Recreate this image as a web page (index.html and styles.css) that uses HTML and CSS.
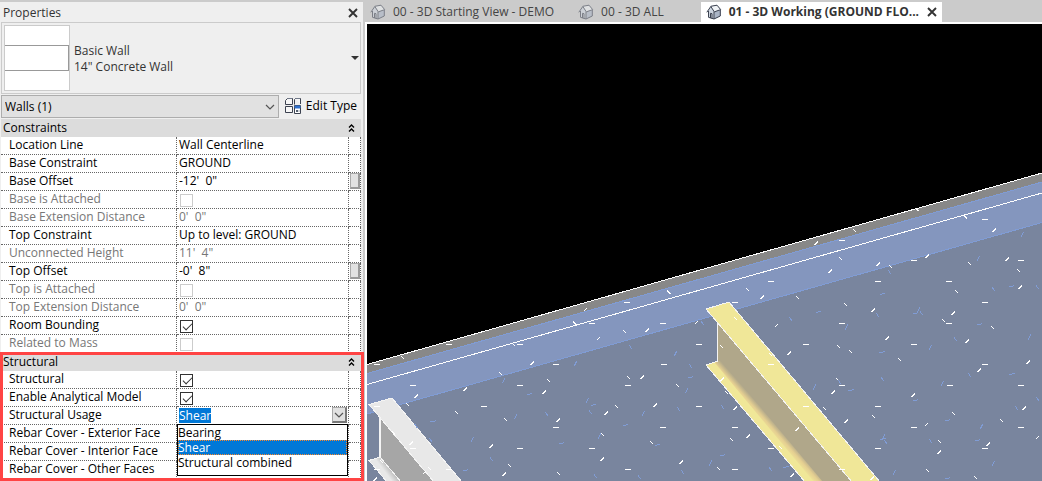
FILE: index.html
```html
<!DOCTYPE html>
<html lang="en">
<head>
<meta charset="utf-8">
<title>Properties - 3D Working</title>
<link rel="stylesheet" href="styles.css">
</head>
<body>
<svg width="0" height="0" class="defs" aria-hidden="true">
  <symbol id="house" viewBox="0 0 16 16">
    <path d="M1 7.500 5 2 11 1 15 5.500 14.500 12 8 15.200 2.500 13.500V8z" fill="#cdd5e0"/>
    <path d="M5 2.200 11 1.200 14.700 5.500 8.500 7.500z" fill="#f0f3f6"/>
    <path d="M8.300 7.800 14.300 6V12L8.300 14.800z" fill="#aab5c6"/>
    <path d="M.8 8.300 4.800 2.500 8.500 8.200M4.800 2.300 11 1.200 14.700 5.600 8.500 7.800M2.500 7v6.300L8 15V8M8 15 14.300 12V6M4.500 14V9.300l1.500.4v4.800" fill="none" stroke="#3c4250"/>
  </symbol>
  <symbol id="cross" viewBox="0 0 10 10"><path d="M1 1 9 9M9 1 1 9" fill="none" stroke="#333" stroke-width="1.900"/></symbol>
  <symbol id="collapse" viewBox="0 0 7 8"><path d="M1 3.500 3.500 1 6 3.500M1 7.500 3.500 5 6 7.500" fill="none" stroke="#000" stroke-width="1.400"/></symbol>
  <symbol id="chevron" viewBox="0 0 10 6"><path d="M1 1 5 5 9 1" fill="none" stroke="#555" stroke-width="1.200"/></symbol>
</svg>
<div class="app">
  <aside class="panel">
    <header class="panel-head">
      <h1>Properties</h1>
      <button class="icon-button" aria-label="Close properties"><svg class="cross"><use href="#cross"/></svg></button>
    </header>
    <button class="type-card">
      <span class="swatch"><span></span><span class="core"></span><span></span></span>
      <span class="type-name">Basic Wall<br>14" Concrete Wall</span>
      <svg class="caret" viewBox="0 0 8 4"><path d="M0 0h8L4 4z" fill="#333"/></svg>
    </button>
    <div class="filter">
      <div class="filter-select">
        <select aria-label="Category filter"><option>Walls (1)</option></select>
        <svg class="chevron"><use href="#chevron"/></svg>
      </div>
      <button class="edit-type">
        <svg class="edit-icon" viewBox="0 0 17 17" fill="none" stroke="#3c4250">
          <path d="M2.500 1.500h5v6h-7v-4zM10.500 1.500h5v5.500M9.500 7.500v-5l1-1M.5 9.500h7v6h-7z" fill="#f7f7f7"/>
          <path d="M2.500 1.500h4.500M10.500 1.500H15" stroke="#70798a"/>
          <path d="M9.500 8.500h6v8h-6z" fill="#fff"/><path d="M10 9h5v2h-5z" fill="#2f6fca" stroke="#2f6fca"/>
          <path d="m11 14 1-1 1 1-1 1zM13.500 14h1" stroke="#55606f"/>
        </svg>Edit Type
      </button>
    </div>

    <section>
      <table class="props">
        <colgroup><col class="name-col"><col><col class="link-col"></colgroup>
        <thead><tr><th colspan="3"><div class="section-head">Constraints<button class="icon-button" aria-label="Collapse Constraints"><svg class="collapse"><use href="#collapse"/></svg></button></div></th></tr></thead>
        <tbody>
          <tr><th>Location Line</th><td>Wall Centerline</td><td></td></tr>
          <tr><th>Base Constraint</th><td>GROUND</td><td></td></tr>
          <tr><th>Base Offset</th><td>-12'&nbsp; 0"</td><td><button class="assoc" aria-label="Associate Base Offset"></button></td></tr>
          <tr class="off"><th><label for="base-att">Base is Attached</label></th><td><input type="checkbox" id="base-att" disabled></td><td></td></tr>
          <tr class="off"><th>Base Extension Distance</th><td>0'&nbsp; 0"</td><td></td></tr>
          <tr><th>Top Constraint</th><td>Up to level: GROUND</td><td></td></tr>
          <tr class="off"><th>Unconnected Height</th><td>11'&nbsp; 4"</td><td></td></tr>
          <tr><th>Top Offset</th><td>-0'&nbsp; 8"</td><td><button class="assoc" aria-label="Associate Top Offset"></button></td></tr>
          <tr class="off"><th><label for="top-att">Top is Attached</label></th><td><input type="checkbox" id="top-att" disabled></td><td></td></tr>
          <tr class="off"><th>Top Extension Distance</th><td>0'&nbsp; 0"</td><td></td></tr>
          <tr><th><label for="room">Room Bounding</label></th><td><input type="checkbox" id="room" checked></td><td></td></tr>
          <tr class="off"><th><label for="mass">Related to Mass</label></th><td><input type="checkbox" id="mass" disabled></td><td></td></tr>
        </tbody>
      </table>
    </section>
    <section class="marked">
      <table class="props">
        <colgroup><col class="name-col"><col><col class="link-col"></colgroup>
        <thead><tr><th colspan="3"><div class="section-head">Structural<button class="icon-button" aria-label="Collapse Structural"><svg class="collapse"><use href="#collapse"/></svg></button></div></th></tr></thead>
        <tbody>
          <tr><th><label for="struct">Structural</label></th><td><input type="checkbox" id="struct" checked></td><td></td></tr>
          <tr><th><label for="analytic">Enable Analytical Model</label></th><td><input type="checkbox" id="analytic" checked></td><td></td></tr>
          <tr><th><label for="usage">Structural Usage</label></th><td class="combo-cell">
            <div class="combo">
              <select id="usage"><option>Shear</option></select>
              <button class="drop" aria-label="Show options"><svg class="chevron"><use href="#chevron"/></svg></button>
            </div>
            <ul class="options" role="listbox" aria-label="Structural Usage">
              <li role="option">Bearing</li><li role="option" aria-selected="true">Shear</li><li role="option">Structural combined</li>
            </ul></td><td></td></tr>
          <tr><th>Rebar Cover - Exterior Face</th><td></td><td></td></tr>
          <tr><th>Rebar Cover - Interior Face</th><td></td><td></td></tr>
          <tr><th>Rebar Cover - Other Faces</th><td></td><td></td></tr>
        </tbody>
      </table>
    </section>
  </aside>

  <main class="workspace">
    <nav class="tabs" aria-label="Open views">
      <a class="tab" href="#start"><svg class="house"><use href="#house"/></svg>00 - 3D Starting View - DEMO</a>
      <a class="tab" href="#all"><svg class="house"><use href="#house"/></svg>00 - 3D ALL</a>
      <div class="tab active"><a href="#working"><svg class="house"><use href="#house"/></svg><span>01 - 3D Working (GROUND FLO...</span></a><button class="icon-button" aria-label="Close view"><svg class="cross"><use href="#cross"/></svg></button></div>
    </nav>
    <div class="view">
      <svg class="scene" viewBox="367 24 675 457" preserveAspectRatio="xMinYMin slice" shape-rendering="crispEdges" role="img" aria-label="3D model view">
        <defs>
          <linearGradient id="yweb" gradientUnits="userSpaceOnUse" x1="752" y1="413" x2="760" y2="406"><stop offset="0" stop-color="#f0e798"/><stop offset=".5" stop-color="#e5cf91"/><stop offset="1" stop-color="#b0a78a"/></linearGradient>
          <linearGradient id="gweb" gradientUnits="userSpaceOnUse" x1="382" y1="468" x2="390" y2="462"><stop offset="0" stop-color="#e8e8e8"/><stop offset="1" stop-color="#a6a6a6"/></linearGradient>
        </defs>
        <path d="M367 24h675v457H367z"/>
        <path d="M367 364.500 1042 173v308H367z" fill="#888"/>
        <path d="M367 373.500 1042 182v299H367z" fill="#8496be"/>
        <path d="M367 414 1042 222.500V481H367z" fill="#79859e"/>
        <path d="M367 373.500 1042 182M367 414 1042 222.500" stroke="#809cd5"/>
        <path d="M367 364.500 1042 173M367 384.500 1042 193" stroke="#fff"/>
        <g stroke="#f4f4f4" stroke-linejoin="round">
          <path d="M380 417v39.500L401 482h33z" fill="#a6a6a6" stroke="none"/>
          <path d="M369 460.500 380 457 401 482H387z" fill="url(#gweb)"/>
          <path d="M369 404.500 392 398 462 482H434z" fill="#e8e8e8"/>
          <path d="M380 418v39" stroke-width="2"/>
        </g>
        <g>
          <path d="M717 322v39L818 482h34z" fill="#b0a78a"/>
          <path d="M706 365 717 361 818 482H805z" fill="#f0e798"/>
          <path d="M717 361h5L823 482h-9L715 363z" fill="url(#yweb)" shape-rendering="auto"/>
          <path d="M706 309 729 302 880 482H852z" fill="#f0e798"/>
          <path d="M880 482 729 302 706 309 852 482M717.500 322v39L706 365 805 482" fill="none" stroke="#f4f4f4"/>
        </g>
        <g id="hatch" fill="none"></g>
      </svg>
    </div>
  </main>
</div>
<script src="hatch.js"></script>
</body>
</html>
```
FILE: hatch.js
```js
// Concrete hatch marks; coordinates are thirds of a scene unit from each group's origin.
const shapes = {
  dash: ['#fff', -9, 0, 'h18'],
  rise: ['#fff', -5, 5, 'l10-10'],
  fall: ['#fff', -5, -5, 'l10 10'],
  blueRise: ['#809cd5', -4, 8, 'l8-16'],
  blueFlat: ['#809cd5', -8, 2, 'h7l9-3'],
  blueFall: ['#809cd5', -4, -6, 'l8 12']
};
const groups = [
  { x: 360, y: 270, marks: {
    dash: '51,283 267,223 159,346 51,409 372,409 480,223 480,346 588,283 588,472 480,535 159,535 51,598 267,598',
    rise: '316,358 169,379 517,280 553,367 394,529 433,613 595,451 154,520 46,628 194,607',
    fall: '127,262 142,403 289,427 421,310 460,223 565,331 436,448 448,586 595,610 100,488 64,574 208,595 645,160',
    blueRise: '432,331 468,439 337,508 647,280',
    blueFlat: '219,453 508,371 604,519 316,600',
    blueFall: '168,468 213,511 394,568 561,433' } },
  { x: 582, y: 200, marks: {
    dash: '30,370 135,307 243,370 351,433 459,307 567,244 780,121 888,244 1209,58 996,181 1102,244 1317,181 1209,307 780,370 673,433 996,433 1101,370 1210,493 567,493 780,556 1104,556 1317,556 246,493 138,556 351,619 672,619 888,619 243,682 459,682 996,682 1317,682 30,745 567,745 888,745 1209,745 138,808 459,808 780,808',
    rise: '11,328 50,415 196,391 344,367 181,532 220,616 73,640 61,778 298,787 541,292 583,377 622,460 460,625 499,709 646,688 754,577 793,664 745,214 703,130 889,193 916,415 874,331 994,586 1033,674 1036,169 1276,178 1237,91 1114,340 1156,424 1192,511 1315,262 1339,487 1327,625 1366,713 1219,733 1072,757 631,826 421,538 871,835',
    fall: '260,277 127,394 139,532 286,556 103,619 61,703 208,727 409,805 496,268 646,292 460,355 418,439 433,577 448,718 595,742 565,463 769,439 805,454 766,538 727,625 790,313 775,175 817,91 925,199 874,649 952,478 1084,361 1123,274 1162,190 1150,50 1309,211 1231,382 1114,640 1072,724 1036,811 1180,832 1258,661 1005,29',
    blueRise: '16,601 53,708 281,460 315,571 184,640 386,789 697,561 793,381 1045,442 1081,550 1189,175 1321,104 1343,411 1199,679 1234,790 937,818 1010,330 905,710',
    blueFlat: '34,613 325,531 130,674 227,733 421,765 709,334 901,280 900,455 807,569 1000,600 1096,660 1192,372 1290,520 1289,258 1187,720 1096,834 612,799 1001,339 903,715',
    blueFall: '145,440 325,497 25,637 290,628 361,369 421,620 565,807 302,817 40,829 171,830 626,357 887,346 922,215 772,545 901,537 1045,722 1120,418 1163,526 1234,267 1366,262 1304,625 1367,597 1018,340 912,727' } }
];
const hatch = document.getElementById('hatch');
for (const group of groups) {
  for (const [name, list] of Object.entries(group.marks)) {
    const [color, dx, dy, stroke] = shapes[name];
    const path = document.createElementNS('http://www.w3.org/2000/svg', 'path');
    path.setAttribute('d', list.split(' ').map(p => {
      const [x, y] = p.split(',').map(Number);
      return `M${x + dx} ${y + dy}${stroke}`;
    }).join(''));
    path.setAttribute('stroke', color);
    path.setAttribute('stroke-width', 3);
    path.setAttribute('transform', `translate(${group.x} ${group.y}) scale(${1 / 3})`);
    hatch.append(path);
  }
}
```
FILE: styles.css
```css
* { box-sizing: border-box; }
body { margin: 0; background: #cbcbcb; font: 12px/18px "Open Sans", "Noto Sans", sans-serif; color: #000; }
button, select { font: inherit; color: inherit; padding: 0; margin: 0; border: 0; background: none; border-radius: 0; }
svg { display: block; flex: none; }
a { color: inherit; text-decoration: none; }
.defs { position: absolute; }
.app { display: flex; min-height: 100vh; }
.panel { flex: none; width: 365px; padding: 0 2px 0 1px; margin-top: 2px; border-right: 2px solid #cbcbcb; background: #efefef; }
.panel-head { display: flex; align-items: center; justify-content: space-between; height: 20px; padding: 2px 3px 0 2px; }
.panel-head h1 { margin: 0; font-size: 12px; font-weight: 400; color: #333; }
.icon-button { display: flex; }
.cross { width: 10px; height: 10px; }
.collapse { width: 7px; height: 8px; }
.chevron { width: 10px; height: 6px; }

.type-card { display: flex; align-items: center; width: 100%; height: 72px; padding: 0 1px 0 2px; border: 1px solid #cbcbcb; text-align: left; color: #333; }
.swatch { display: grid; grid-template-rows: 19px 26px 19px; width: 66px; border: 1px solid #cbcbcb; background: #fff; }
.swatch .core { border: solid #999; border-width: 1px 1px 1px 0; }
.type-name { flex: 1; padding: 2px 0 0 4px; line-height: 16px; }
.caret { width: 8px; height: 4px; }

.filter { display: flex; align-items: center; margin: 1px 0; }
.filter-select { flex: 1; display: grid; align-items: center; }
.filter-select > * { grid-area: 1 / 1; }
.filter-select select { appearance: none; width: 100%; height: 23px; padding: 0 3px; border: 1px solid #adadad; background: #e1e1e1; }
.filter-select .chevron { justify-self: end; margin-right: 4px; pointer-events: none; }
.edit-type { display: flex; align-items: center; gap: 4px; padding: 0 4px 2px 6px; }
.edit-icon { width: 17px; height: 17px; }

.props { width: 100%; table-layout: fixed; border-collapse: separate; border-spacing: 0; background: #fff; }
.name-col { width: 176px; }
.link-col { width: 12px; }
.props thead th { padding: 0; background: #dcdcdc; text-align: left; font-weight: 400; }
.section-head { display: flex; align-items: center; justify-content: space-between; height: 18px; padding: 0 6px 0 2px; }
.props tbody th, .props td { height: 18px; padding: 0; line-height: 16px; vertical-align: top; border: dotted #666; border-width: 0 1px 1px 0; text-align: left; font-weight: 400; white-space: nowrap; }
.props tbody th { padding-left: 8px; }
.props td { padding-left: 2px; }
.props td:last-child { padding-left: 1px; }
.off { color: #777; }
.props input { appearance: none; display: block; width: 13px; height: 13px; margin: 3px 0 0 1px; border: 1px solid #333; background: #fff; }
.props input:disabled { border-color: #ccc; }
.props input:checked { position: relative; }
.props input:checked::after { content: ""; position: absolute; left: 2px; top: 2px; width: 8px; height: 4px; border: solid #333; border-width: 0 0 1px 1px; transform: rotate(-45deg); }
.assoc { display: block; width: 10px; height: 16px; border: 1px solid #aaa; border-right: 2px solid #999; border-bottom: 2px solid #999; background: #e1e1e1; }
.marked { position: relative; }
.marked::after { content: ""; position: absolute; inset: -1px -3px -2px -1px; border: 3px solid #ff4444; pointer-events: none; }
.props .combo-cell { position: relative; }
.combo { display: flex; align-items: center; justify-content: space-between; padding-right: 1px; }
.combo select { appearance: none; field-sizing: content; height: 15px; background: #0078d7; color: #fff; line-height: 15px; }
.drop { display: grid; place-items: center; width: 15px; height: 16px; border: 1px solid #aaa; border-right: 2px solid #777; border-bottom: 2px solid #777; background: #e1e1e1; }
.options { position: absolute; z-index: 1; left: 0; top: 100%; width: 100%; height: 52px; margin: 0; padding: 0; border: 1px solid #000; background: #fff; list-style: none; line-height: 15px; }
.options [aria-selected] { background: #0078d7; color: #fff; outline: 1px dotted #ff8728; outline-offset: -1px; }

.workspace { flex: 1; min-width: 0; display: flex; flex-direction: column; }
.tabs { display: flex; height: 22px; padding-top: 2px; color: #444; }
.tab, .tab a { display: flex; align-items: center; gap: 7px; white-space: nowrap; }
.tab { padding: 0 13px 0 5px; margin-right: 6px; }
.tab .house { opacity: .55; }
.house { width: 16px; height: 16px; }
.tab.active { padding: 0 5px; margin: 0 0 0 18px; gap: 8px; background: #fff; color: #333; font-weight: 700; }
.tab.active .house { opacity: 1; }
.view { flex: 1; position: relative; border: solid #fff; border-width: 2px 0 0 2px; background: #000; }
.scene { position: absolute; inset: 0; width: 100%; height: 100%; }
```
